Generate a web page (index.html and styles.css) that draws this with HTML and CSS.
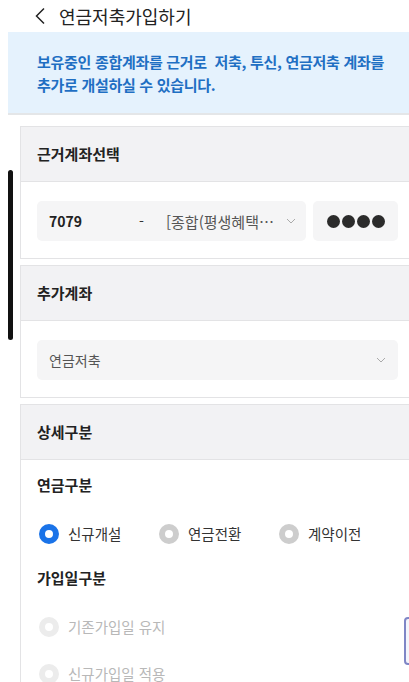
FILE: index.html
```html
<!DOCTYPE html>
<html lang="ko">
<head>
  <meta charset="UTF-8">
  <meta name="viewport" content="width=device-width, initial-scale=1.0">
  <title>연금저축가입하기</title>
  <link rel="stylesheet" href="styles.css">
</head>
<body>

  <div class="page">
    <div class="top-bar">
      <svg class="back" width="14" height="18" viewBox="0 0 14 18">
        <path d="M11 1.5 L3.5 9 L11 16.5" fill="none" stroke="#222" stroke-width="1.5"/>
      </svg>
      <div class="title">연금저축가입하기</div>
    </div>

    <!-- 안내 문구 -->
    <div class="notice">
      보유중인 종합계좌를 근거로&nbsp; 저축, 투신, 연금저축 계좌를<br>
      추가로 개설하실 수 있습니다.
    </div>

    <div class="card">
      <div class="card-header">근거계좌선택</div>
      <div class="card-body">
        <div class="account-row">
          <div class="select account-select">
            <span class="acc-no">7079</span>
            <span class="acc-dash">-</span>
            <span class="acc-name">[종합(평생혜택…</span>
            <svg class="chev" width="10" height="6" viewBox="0 0 10 6"><path d="M1 1 L5 5 L9 1" fill="none" stroke="#aaa" stroke-width="1"/></svg>
          </div>
          <div class="select pw-box">
            <span class="dot"></span><span class="dot"></span><span class="dot"></span><span class="dot"></span>
          </div>
        </div>
      </div>
    </div>

    <div class="card">
      <div class="card-header">추가계좌</div>
      <div class="card-body">
        <div class="select full-select">
          <span>연금저축</span>
          <svg class="chev" width="10" height="6" viewBox="0 0 10 6"><path d="M1 1 L5 5 L9 1" fill="none" stroke="#aaa" stroke-width="1"/></svg>
        </div>
      </div>
    </div>

    <div class="card">
      <div class="card-header">상세구분</div>
      <div class="card-body detail">
        <div class="sub-title">연금구분</div>
        <div class="radio-row">
          <label class="radio checked"><span class="mark"></span>신규개설</label>
          <label class="radio"><span class="mark"></span>연금전환</label>
          <label class="radio"><span class="mark"></span>계약이전</label>
        </div>
        <div class="sub-title">가입일구분</div>
        <div class="radio-col">
          <label class="radio disabled"><span class="mark"></span>기존가입일 유지</label>
          <label class="radio disabled"><span class="mark"></span>신규가입일 적용</label>
        </div>
      </div>
    </div>

    <!-- 화면 위에 겹친 요소 -->
    <div class="scroll-bar"></div>
    <div class="side-tab"></div>
  </div>

</body>
</html>
```

FILE: styles.css
```css
body {
  margin: 0;
  font-family: "Noto Sans CJK KR", "Noto Sans", sans-serif;
  background-color: #ffffff;
  color: #222;
  overflow: hidden;
}

.page {
  position: relative;
  width: 409px;
  height: 682px;
  overflow: hidden;
}

.top-bar {
  display: flex;
  align-items: center;
  height: 32px;
  padding-left: 33px;
}

.top-bar .back {
  margin-right: 12px;
}

.top-bar .title {
  font-size: 18px;
  color: #222;
  letter-spacing: 0;
}

.notice {
  margin-left: 8px;
  margin-right: -10px;
  height: 83px;
  box-sizing: border-box;
  padding: 19px 0 0 29px;
  background-color: #e5f2fd;
  color: #1f6fc3;
  font-size: 15px;
  font-weight: 700;
  line-height: 22.5px;
  letter-spacing: -0.3px;
  border-bottom: 2px solid #e4e6e8;
}

.card {
  margin: 11px -20px 0 20px;
  border: 1px solid #e3e3e5;
  background-color: #fff;
}

.card + .card {
  margin-top: 6px;
}

.card-header {
  height: 54px;
  line-height: 54px;
  padding-left: 16px;
  background-color: #f2f2f4;
  border-bottom: 1px solid #e3e3e5;
  font-size: 15px;
  font-weight: 700;
  color: #222;
}

.card-body {
  padding: 19px 30px 17px 16px;
}

.account-row {
  display: flex;
  gap: 7px;
}

.select {
  display: flex;
  align-items: center;
  height: 40px;
  background-color: #f5f5f6;
  border-radius: 5px;
  font-size: 14px;
}

.account-select {
  width: 270px;
  padding: 0 10px 0 12px;
  box-sizing: border-box;
}

.acc-no {
  font-weight: 700;
  color: #222;
  width: 90px;
}

.acc-dash {
  width: 27px;
  color: #333;
}

.acc-name {
  color: #555;
  font-size: 15px;
  flex: 1;
}

.chev {
  margin-left: 6px;
}

.pw-box {
  width: 85px;
  justify-content: center;
  gap: 2px;
}

.dot {
  width: 13px;
  height: 13px;
  border-radius: 50%;
  background-color: #2b2b2b;
}

.full-select {
  justify-content: space-between;
  padding: 0 12px;
  color: #555;
}

.detail {
  padding-top: 15px;
  padding-bottom: 20px;
}

.sub-title {
  font-size: 15px;
  font-weight: 700;
  color: #222;
  line-height: 20px;
}

.radio-row {
  display: flex;
  margin: 29px 0 24px;
}

.radio-row .radio {
  width: 120px;
}

.radio-col {
  display: flex;
  flex-direction: column;
  gap: 27px;
  margin-top: 29px;
}

.radio {
  display: flex;
  align-items: center;
  font-size: 14.5px;
  color: #333;
  line-height: 20px;
}

.radio .mark {
  width: 20px;
  height: 20px;
  border-radius: 50%;
  box-sizing: border-box;
  border: 6px solid #cdcdcd;
  background-color: #fff;
  margin: 0 9px 0 2px;
}

.radio.checked .mark {
  border-color: #1a73e8;
}

.radio.disabled {
  color: #b8b8b8;
}

.radio.disabled .mark {
  border-color: #ececec;
}

.scroll-bar {
  position: absolute;
  left: 8px;
  top: 170px;
  width: 5px;
  height: 170px;
  border-radius: 3px;
  background-color: #111;
}

.side-tab {
  position: absolute;
  left: 404px;
  top: 617px;
  width: 20px;
  height: 44px;
  border: 2px solid #7f86c6;
  border-radius: 4px;
  background-color: #f4f5fb;
}
```
